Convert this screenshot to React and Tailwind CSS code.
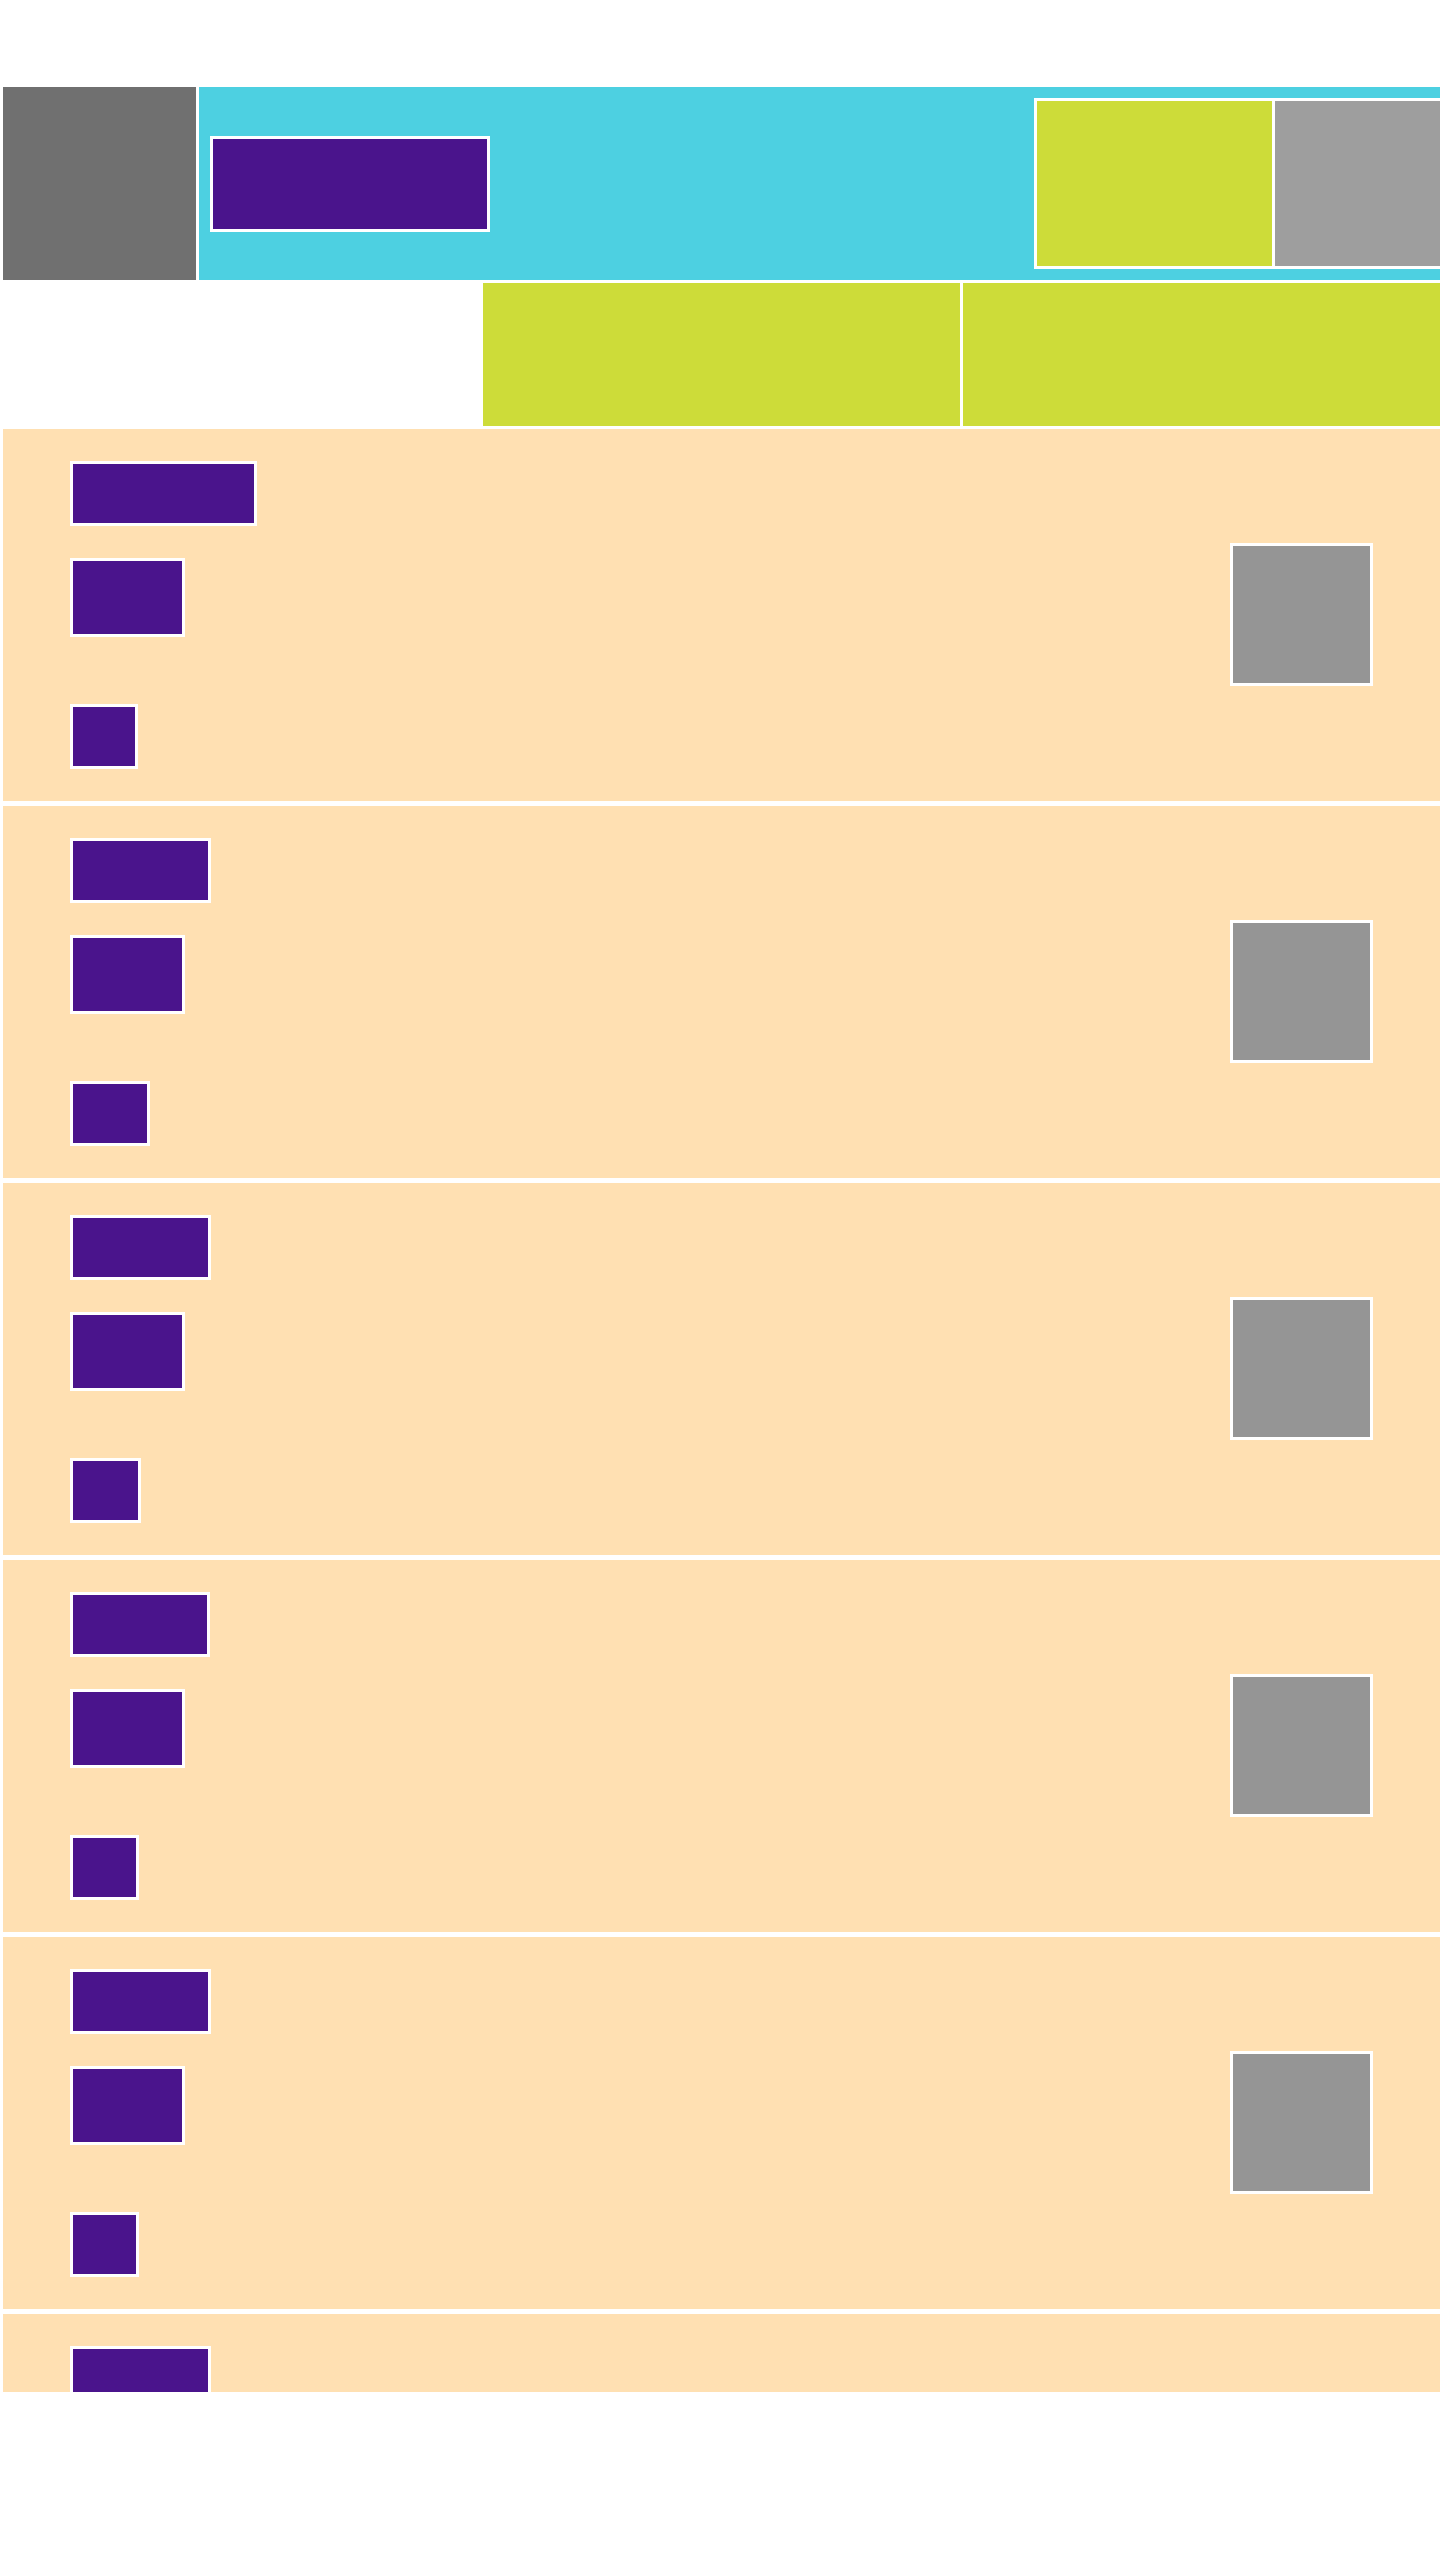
import React from "react";

const cards = [
  { w1: "w-[187px]", w3: "w-[68px]" },
  { w1: "w-[141px]", w3: "w-[80px]" },
  { w1: "w-[141px]", w3: "w-[71px]" },
  { w1: "w-[140px]", w3: "w-[69px]" },
  { w1: "w-[141px]", w3: "w-[69px]" },
  { w1: "w-[141px]", w3: "w-[69px]" },
];

function Card({ w1, w3 }) {
  return (
    <div className="h-[372px] shrink-0 bg-[#ffe0b2] flex items-start justify-between px-[67px]">
      <div className="pt-[32px] flex flex-col items-start">
        <div className={`${w1} h-[65px] border-[3px] border-white bg-[#4a148c]`} />
        <div className="mt-[32px] w-[115px] h-[79px] border-[3px] border-white bg-[#4a148c]" />
        <div className={`mt-[67px] ${w3} h-[65px] border-[3px] border-white bg-[#4a148c]`} />
      </div>
      <div className="mt-[114px] w-[143px] h-[143px] border-[3px] border-white bg-[#959595]" />
    </div>
  );
}

export default function App() {
  return (
    <div className="w-[1440px] h-[2560px] bg-white overflow-hidden font-['Liberation_Sans',sans-serif]">
      <div className="pt-[87px] pl-[3px] flex flex-col gap-[3px]">
        {/* Header */}
        <div className="flex h-[193px] gap-[3px]">
          <div className="w-[193px] shrink-0 bg-[#707070]" />
          <div className="flex-1 bg-[#4dd0e1] flex items-center pl-[11px] overflow-hidden">
            <div className="w-[280px] h-[96px] shrink-0 border-[3px] border-white bg-[#4a148c]" />
            <div className="ml-[544px] shrink-0 h-[171px] border-[3px] border-white bg-white flex gap-[3px]">
              <div className="w-[235px] bg-[#cddc39]" />
              <div className="w-[235px] bg-[#9e9e9e]" />
            </div>
          </div>
        </div>
        {/* Second row */}
        <div className="grid grid-cols-3 gap-[3px] h-[143px]">
          <div />
          <div className="bg-[#cddc39]" />
          <div className="bg-[#cddc39]" />
        </div>
        {/* List */}
        <div className="h-[1963px] overflow-hidden flex flex-col gap-[5px]">
          {cards.map((c, i) => (
            <Card key={i} {...c} />
          ))}
        </div>
      </div>
    </div>
  );
}
